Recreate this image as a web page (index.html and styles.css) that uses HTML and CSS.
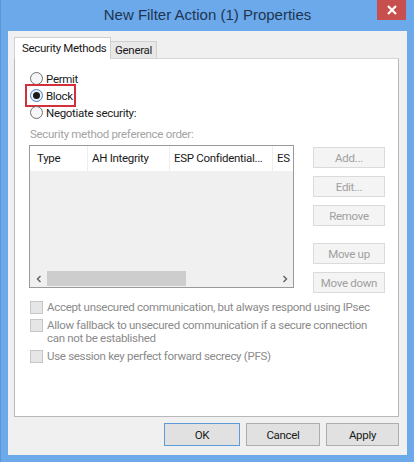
FILE: index.html
```html
<!DOCTYPE html>
<html>
<head>
<meta charset="utf-8">
<link rel="stylesheet" href="styles.css">
</head>
<body>
<div class="window">
  <div class="titlebar">
    <div class="tb-spacer"></div>
    <div class="title">New Filter Action (1) Properties</div>
    <div class="tb-right">
      <div class="close">
        <svg width="12" height="10" viewBox="0 0 12 10"><path d="M2 1 L10 9 M10 1 L2 9" stroke="#fff" stroke-width="2.2" fill="none"/></svg>
      </div>
    </div>
  </div>
  <div class="client">
    <div class="tabs">
      <div class="tab active">Security Methods</div>
      <div class="tab">General</div>
    </div>
    <div class="panel">
      <div class="radios">
        <label class="radio"><span class="circle"></span><span>Permit</span></label>
        <label class="radio block-row"><span class="circle checked"></span><span>Block</span><span class="highlight"></span></label>
        <label class="radio"><span class="circle"></span><span>Negotiate security:</span></label>
      </div>
      <div class="caption">Security method preference order:</div>
      <div class="listrow">
        <div class="listbox">
          <div class="lv-header">
            <div class="col c1">Type</div>
            <div class="col c2">AH Integrity</div>
            <div class="col c3">ESP Confidential...</div>
            <div class="col c4">ES</div>
          </div>
          <div class="lv-body"></div>
          <div class="hscroll">
            <div class="arrow">
              <svg width="8" height="8" viewBox="0 0 8 8"><path d="M5.5 1 L2.5 4 L5.5 7" stroke="#606060" stroke-width="1.4" fill="none"/></svg>
            </div>
            <div class="track"><div class="thumb"></div></div>
            <div class="arrow">
              <svg width="8" height="8" viewBox="0 0 8 8"><path d="M2.5 1 L5.5 4 L2.5 7" stroke="#606060" stroke-width="1.4" fill="none"/></svg>
            </div>
          </div>
        </div>
        <div class="sidebtns">
          <div class="btn dis">Add...</div>
          <div class="btn dis">Edit...</div>
          <div class="btn dis">Remove</div>
          <div class="btn dis sep">Move up</div>
          <div class="btn dis">Move down</div>
        </div>
      </div>
      <div class="checks">
        <div class="check"><span class="box"></span><span class="ctext">Accept unsecured communication, but always respond using IPsec</span></div>
        <div class="check"><span class="box"></span><span class="ctext">Allow fallback to unsecured communication if a secure connection can not be established</span></div>
        <div class="check"><span class="box"></span><span class="ctext">Use session key perfect forward secrecy (PFS)</span></div>
      </div>
    </div>
    <div class="footer">
      <div class="btn fbtn ok">OK</div>
      <div class="btn fbtn cancel">Cancel</div>
      <div class="btn fbtn apply">Apply</div>
    </div>
  </div>
</div>
</body>
</html>
```
FILE: styles.css
```css
* { box-sizing: border-box; }
html, body { margin: 0; padding: 0; }
body {
  font-family: Roboto, "Liberation Sans", Arial, sans-serif;
  font-size: 11.5px;
  letter-spacing: -0.3px;
  color: #1a1a1a;
  background: #6aa9ec;
}
.window {
  width: 414px;
  height: 462px;
  background: #6ba9eb;
  display: flex;
  flex-direction: column;
  border-left: 1px solid #5a96d8;
}
.titlebar {
  height: 31px;
  display: grid;
  grid-template-columns: 1fr auto 1fr;
}
.title {
  font-family: "Liberation Sans", Arial, sans-serif;
  font-size: 15px;
  letter-spacing: 0;
  color: #1f3550;
  padding-top: 6px;
  white-space: nowrap;
}
.tb-right { display: flex; justify-content: flex-end; padding-right: 8px; }
.close {
  width: 29px;
  height: 20px;
  background: #c7504e;
  display: flex;
  align-items: center;
  justify-content: center;
}
.client {
  margin: 0 7px 7px 7px;
  height: 424px;
  background: #f0f0f0;
  padding: 6px 8px 0 6px;
  display: flex;
  flex-direction: column;
}
.tabs {
  display: flex;
  align-items: flex-end;
  height: 21px;
  position: relative;
  z-index: 1;
}
.tab {
  border: 1px solid #d0d0d0;
  border-bottom: none;
  background: #e8e8e8;
  height: 17px;
  padding: 0 4px;
  line-height: 17px;
  color: #1a1a1a;
  white-space: nowrap;
}
.tab.active {
  background: #ffffff;
  height: 22px;
  margin-bottom: -1px;
  width: 97px;
  padding: 3px 0 0 7px;
  line-height: 14px;
}
.tab:not(.active) { width: 46px; border-left: none; }
.panel {
  background: #ffffff;
  border: 1px solid #b9b9b9;
  border-top-color: #d6d6d6;
  height: 359px;
  padding: 11px 0 0 15px;
}
.radios { display: flex; flex-direction: column; }
.radio {
  height: 17px;
  display: flex;
  align-items: center;
  position: relative;
}
.circle {
  width: 13px;
  height: 13px;
  border-radius: 50%;
  border: 1px solid #6f6f6f;
  background: #f6f6f6;
  margin-right: 3px;
  display: flex;
  align-items: center;
  justify-content: center;
}
.circle.checked { border-color: #4f7fc0; background: #e8f0fb; }
.circle.checked::after {
  content: "";
  width: 7px;
  height: 7px;
  border-radius: 50%;
  background: #1a1a1a;
}
.highlight {
  position: absolute;
  left: -5px;
  top: -3px;
  width: 51px;
  height: 23px;
  border: 2px solid #d3303c;
}
.caption {
  color: #a3a3a3;
  margin-top: 6px;
  height: 14px;
  line-height: 14px;
}
.listrow {
  display: flex;
  margin-top: 4px;
  margin-left: -1px;
}
.listbox {
  width: 265px;
  height: 143px;
  border: 1px solid #9a9a9a;
  background: #f0f0f0;
  display: flex;
  flex-direction: column;
}
.lv-header {
  height: 25px;
  background: #ffffff;
  display: flex;
  align-items: center;
}
.col {
  height: 25px;
  line-height: 25px;
  padding-left: 7px;
  border-right: 1px solid #eeeeee;
  white-space: nowrap;
  overflow: hidden;
}
.c1 { width: 58px; }
.c2 { width: 82px; padding-left: 4px; }
.c3 { width: 103px; padding-left: 4px; }
.c4 { flex: 1; border-right: none; padding-left: 4px; }
.lv-body { flex: 1; }
.hscroll {
  height: 17px;
  display: flex;
  background: #f0f0f0;
}
.arrow {
  width: 17px;
  display: flex;
  align-items: center;
  justify-content: center;
}
.track { flex: 1; display: flex; align-items: stretch; padding: 1px 0; }
.thumb { width: 139px; background: #cdcdcd; }
.sidebtns {
  display: flex;
  flex-direction: column;
  gap: 8px;
  margin-left: 19px;
  padding-top: 2px;
}
.btn {
  display: flex;
  align-items: center;
  justify-content: center;
  border: 1px solid #adadad;
  background: #e1e1e1;
  color: #1a1a1a;
}
.btn.dis {
  width: 72px;
  height: 21px;
  border-color: #dadada;
  background: #f4f4f4;
  color: #a0a0a0;
}
.btn.sep { margin-top: 9px; }
.checks {
  margin-top: 8px;
  display: flex;
  flex-direction: column;
  gap: 5px;
}
.check { display: flex; align-items: flex-start; }
.box {
  width: 13px;
  height: 13px;
  border: 1px solid #c6c6c6;
  background: #e6e6e6;
  flex: none;
  margin-right: 4px;
}
.ctext {
  color: #8a8a8a;
  line-height: 13px;
  width: 330px;
}
.footer {
  display: flex;
  justify-content: flex-end;
  gap: 6px;
  padding-top: 6px;
}
.fbtn { height: 23px; }
.ok { width: 76px; border-color: #5a9bd8; }
.cancel { width: 74px; }
.apply { width: 73px; }
```
